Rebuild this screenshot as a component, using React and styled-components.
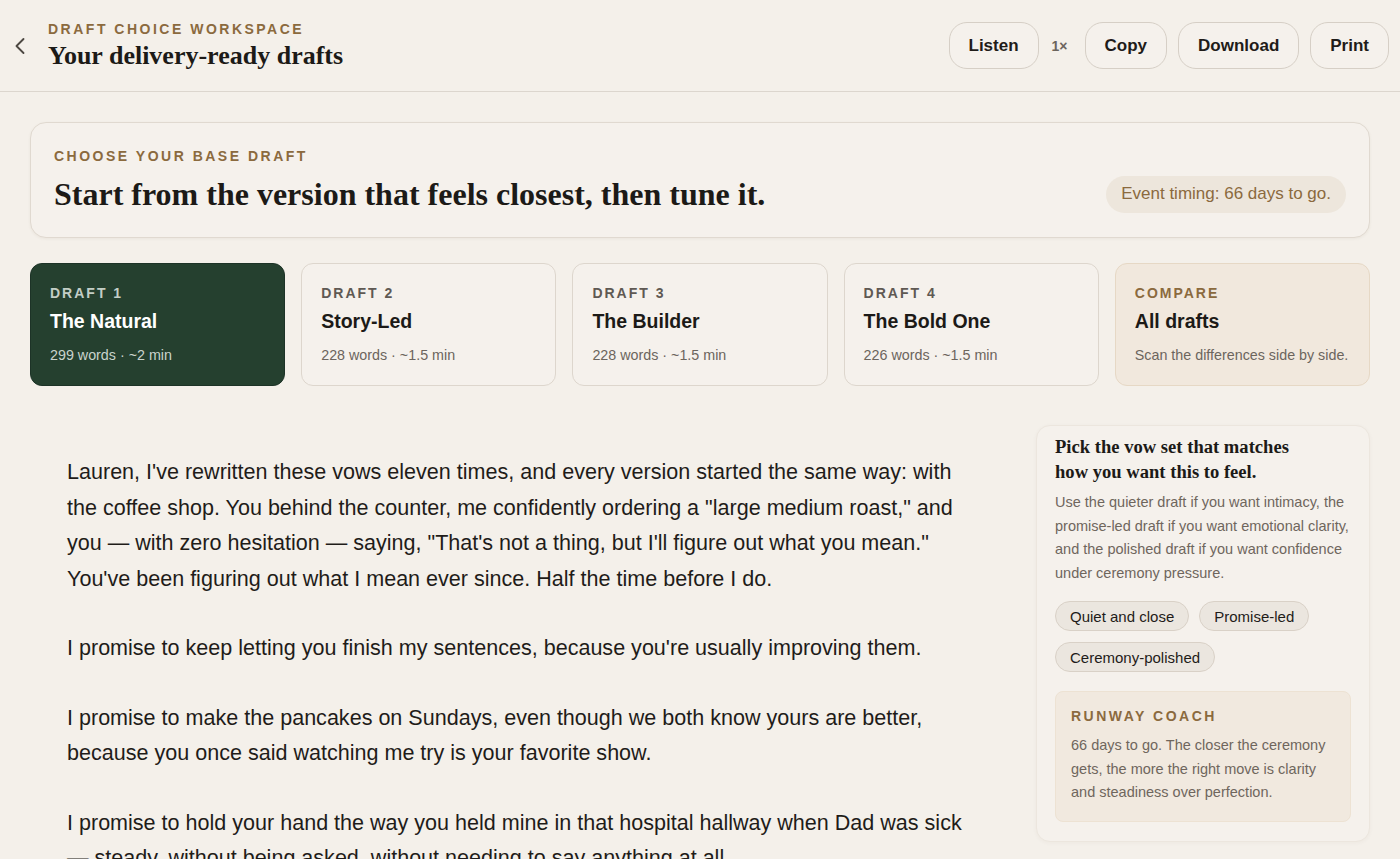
import React from 'react';
import styled, { createGlobalStyle } from 'styled-components';
import { ChevronLeft } from 'lucide-react';

const serif = `"Liberation Serif", "Times New Roman", serif`;
const sans = `"Liberation Sans", Arial, Helvetica, sans-serif`;

const Global = createGlobalStyle`
    html, body {
        margin: 0;
        padding: 0;
        background: #f4f0ea;
        overflow: hidden;
    }
    body {
        font-family: ${sans};
        color: #1f1c19;
    }
    * {
        box-sizing: border-box;
    }
`

const Page = styled.div`
    min-height: 100vh;
    background: #f4f0ea;
`

const Header = styled.header`
    height: 92px;
    display: flex;
    align-items: center;
    justify-content: space-between;
    padding: 0 11px 0 6px;
    border-bottom: 1px solid #dcd6ce;
`

const TitleGroup = styled.div`
    display: flex;
    align-items: center;
    gap: 14px;
`

const BackButton = styled.button`
    border: none;
    background: none;
    padding: 0;
    display: flex;
    color: #4d4842;
    cursor: pointer;
`

const Eyebrow = styled.div`
    font-family: ${sans};
    font-size: 14px;
    line-height: 18px;
    font-weight: 700;
    letter-spacing: ${p => p.$tight ? '2px' : '2.5px'};
    text-transform: uppercase;
    color: ${p => p.$color || '#8b6a3e'};
`

const PageTitle = styled.h1`
    margin: 2px 0 0;
    font-family: ${serif};
    font-size: 26px;
    line-height: 32px;
    font-weight: 700;
    color: #1c1a17;
`

const Actions = styled.div`
    display: flex;
    align-items: center;
    gap: 11px;
`

const ActionButton = styled.button`
    height: 47px;
    padding: 0 19px;
    border: 1px solid #d6cfc6;
    border-radius: 18px;
    background: #f5f1ec;
    font-family: ${sans};
    font-size: 17px;
    font-weight: 700;
    color: #1f1c19;
    cursor: pointer;
`

const Speed = styled.span`
    font-size: 14px;
    font-weight: 700;
    color: #6c655d;
    margin: 0 6px 0 2px;
`

const Main = styled.main`
    padding: 30px 30px 0;
`

const Hero = styled.section`
    border: 1px solid #e0d9d0;
    border-radius: 16px;
    background: #f5f1ec;
    box-shadow: 0 1px 3px rgba(80, 60, 30, 0.06);
    padding: 24px 23px;
`

const HeroRow = styled.div`
    display: flex;
    align-items: center;
    justify-content: space-between;
    margin-top: 10px;
`

const HeroTitle = styled.h2`
    margin: 0;
    font-family: ${serif};
    font-size: 32px;
    line-height: 38px;
    font-weight: 700;
    color: #1c1a17;
`

const TimingPill = styled.div`
    height: 37px;
    display: flex;
    align-items: center;
    padding: 0 15px;
    border-radius: 999px;
    background: #ede6dc;
    font-size: 17px;
    color: #8b6a3e;
`

const DraftGrid = styled.div`
    display: grid;
    grid-template-columns: repeat(5, 1fr);
    gap: 16px;
    margin-top: 25px;
`

const DraftCard = styled.div`
    height: 123px;
    padding: 20px 19px;
    border-radius: 12px;
    border: 1px solid ${p => p.$active ? '#1d3327' : p.$compare ? '#e6d8c5' : '#ddd6cd'};
    background: ${p => p.$active ? '#25402f' : p.$compare ? '#f1e8dd' : '#f5f1ec'};
    cursor: pointer;
`

const CardTitle = styled.div`
    margin-top: 7px;
    font-size: 19.5px;
    line-height: 24px;
    font-weight: 700;
    color: ${p => p.$active ? '#ffffff' : '#1c1a17'};
`

const CardMeta = styled.div`
    margin-top: 12px;
    font-size: 14.3px;
    line-height: 20px;
    color: ${p => p.$active ? '#c9d3cc' : '#6c655d'};
`

const Workspace = styled.div`
    display: grid;
    grid-template-columns: 1fr 334px;
    gap: 32px;
    margin-top: 39px;
`

const DraftText = styled.article`
    padding: 29px 32px 0 37px;
`

const Paragraph = styled.p`
    margin: 0 0 34px;
    font-size: 21.55px;
    line-height: 35.5px;
    color: #1f1c19;
`

const Sidebar = styled.aside`
    align-self: start;
    border: 1px solid #ece6de;
    border-radius: 14px;
    background: #f5f1ec;
    box-shadow: 0 1px 4px rgba(80, 60, 30, 0.04);
    padding: 8px 18px 19px;
`

const SideTitle = styled.h3`
    margin: 0;
    max-width: 250px;
    font-family: ${serif};
    font-size: 18.6px;
    line-height: 25px;
    font-weight: 700;
    color: #1c1a17;
`

const SideText = styled.p`
    margin: ${p => p.$inBox ? '9px 0 0' : '7px 0 0'};
    font-size: 14.5px;
    line-height: 23.5px;
    color: #6f665d;
`

const Chips = styled.div`
    display: flex;
    flex-wrap: wrap;
    gap: 11px 10px;
    margin-top: 16px;
`

const Chip = styled.button`
    height: 30px;
    padding: 0 14px;
    border: 1px solid #d9d1c7;
    border-radius: 999px;
    background: #ebe6df;
    font-family: ${sans};
    font-size: 15px;
    color: #1f1c19;
    cursor: pointer;
`

const CoachBox = styled.div`
    margin-top: 19px;
    padding: 15px 15px 16px;
    border: 1px solid #ede2d3;
    border-radius: 8px;
    background: #f1e9df;
`

const drafts = [
    { label: 'Draft 1', title: 'The Natural', meta: '299 words · ~2 min', active: true },
    { label: 'Draft 2', title: 'Story-Led', meta: '228 words · ~1.5 min' },
    { label: 'Draft 3', title: 'The Builder', meta: '228 words · ~1.5 min' },
    { label: 'Draft 4', title: 'The Bold One', meta: '226 words · ~1.5 min' },
    { label: 'Compare', title: 'All drafts', meta: 'Scan the differences side by side.', compare: true },
];

const paragraphs = [
    'Lauren, I\'ve rewritten these vows eleven times, and every version started the same way: with the coffee shop. You behind the counter, me confidently ordering a "large medium roast," and you — with zero hesitation — saying, "That\'s not a thing, but I\'ll figure out what you mean." You\'ve been figuring out what I mean ever since. Half the time before I do.',
    'I promise to keep letting you finish my sentences, because you\'re usually improving them.',
    'I promise to make the pancakes on Sundays, even though we both know yours are better, because you once said watching me try is your favorite show.',
    'I promise to hold your hand the way you held mine in that hospital hallway when Dad was sick — steady, without being asked, without needing to say anything at all.',
    'I promise to keep choosing you, on the loud days and the quiet ones.',
];

const cardEyebrowColor = (d) => {
    if (d.active) return '#c3cec6';
    if (d.compare) return '#8b6a3e';
    return '#5f5953';
}

export default function App() {
    return (
        <Page>
            <Global />
            <Header>
                <TitleGroup>
                    <BackButton aria-label="Back">
                        <ChevronLeft size={28} strokeWidth={1.6} />
                    </BackButton>
                    <div>
                        <Eyebrow>Draft choice workspace</Eyebrow>
                        <PageTitle>Your delivery-ready drafts</PageTitle>
                    </div>
                </TitleGroup>
                <Actions>
                    <ActionButton>Listen</ActionButton>
                    <Speed>1×</Speed>
                    <ActionButton>Copy</ActionButton>
                    <ActionButton>Download</ActionButton>
                    <ActionButton>Print</ActionButton>
                </Actions>
            </Header>

            <Main>
                <Hero>
                    <Eyebrow>Choose your base draft</Eyebrow>
                    <HeroRow>
                        <HeroTitle>Start from the version that feels closest, then tune it.</HeroTitle>
                        <TimingPill>Event timing: 66 days to go.</TimingPill>
                    </HeroRow>
                </Hero>

                <DraftGrid>
                    {drafts.map(d => (
                        <DraftCard key={d.label} $active={d.active} $compare={d.compare}>
                            <Eyebrow $tight $color={cardEyebrowColor(d)}>{d.label}</Eyebrow>
                            <CardTitle $active={d.active}>{d.title}</CardTitle>
                            <CardMeta $active={d.active}>{d.meta}</CardMeta>
                        </DraftCard>
                    ))}
                </DraftGrid>

                <Workspace>
                    <DraftText>
                        {paragraphs.map((p, i) => <Paragraph key={i}>{p}</Paragraph>)}
                    </DraftText>
                    <Sidebar>
                        <SideTitle>Pick the vow set that matches how you want this to feel.</SideTitle>
                        <SideText>
                            Use the quieter draft if you want intimacy, the promise-led draft if you want emotional clarity, and the polished draft if you want confidence under ceremony pressure.
                        </SideText>
                        <Chips>
                            <Chip>Quiet and close</Chip>
                            <Chip>Promise-led</Chip>
                            <Chip>Ceremony-polished</Chip>
                        </Chips>
                        <CoachBox>
                            <Eyebrow>Runway coach</Eyebrow>
                            <SideText $inBox>
                                66 days to go. The closer the ceremony gets, the more the right move is clarity and steadiness over perfection.
                            </SideText>
                        </CoachBox>
                    </Sidebar>
                </Workspace>
            </Main>
        </Page>
    )
}
